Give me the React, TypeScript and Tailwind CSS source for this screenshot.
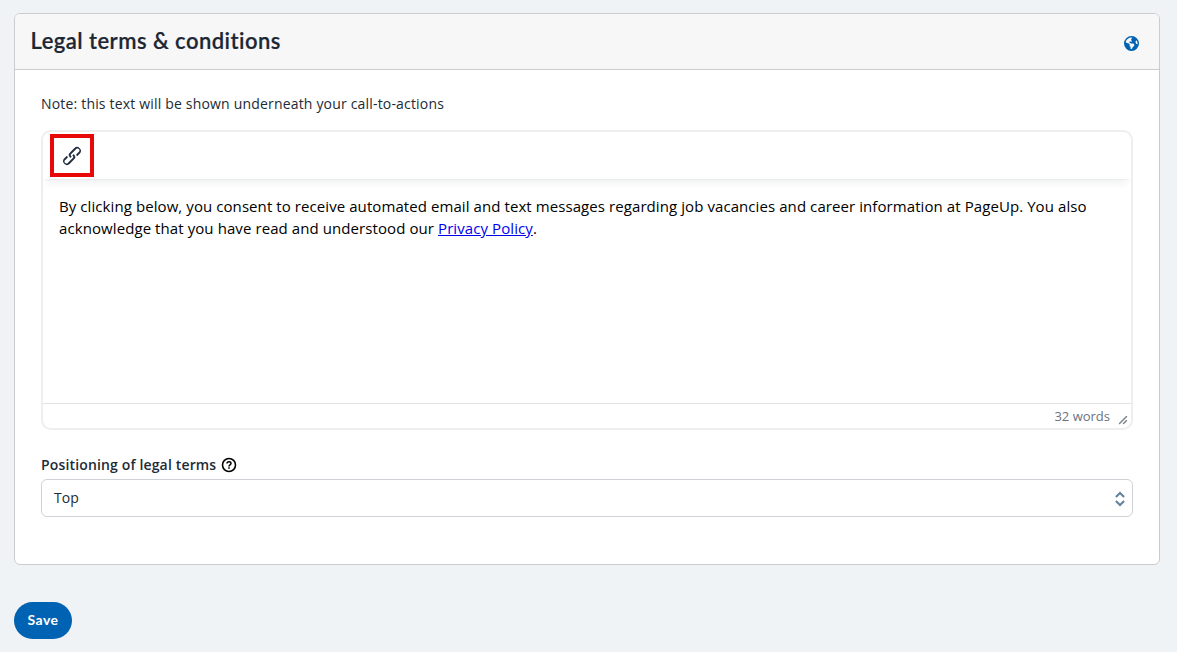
import { FaEarthAmericas } from "react-icons/fa6";

function LinkIcon() {
  return (
    <svg width="24" height="24" viewBox="0 0 24 24" fill="#222f3e">
      <path d="M6.2 12.3a1 1 0 0 1 1.4 1.4l-2 2a2 2 0 1 0 2.6 2.8l4.8-4.8a1 1 0 0 0 0-1.4 1 1 0 1 1 1.4-1.3 2.9 2.9 0 0 1 0 4L9.6 20a3.9 3.9 0 0 1-5.5-5.5l2-2Zm11.6-.6a1 1 0 0 1-1.4-1.4l2-2a2 2 0 1 0-2.6-2.8L11 10.3a1 1 0 0 0 0 1.4A1 1 0 1 1 9.6 13a2.9 2.9 0 0 1 0-4L14.4 4a3.9 3.9 0 0 1 5.5 5.5l-2 2Z" />
    </svg>
  );
}

function HelpIcon() {
  return (
    <svg width="16" height="16" viewBox="0 0 16 16" fill="none" stroke="#000" strokeWidth="1.6">
      <circle cx="8" cy="8" r="6.5" />
      <path d="M6 6.6C6 5.3 6.9 4.7 8 4.7s2 .7 2 1.7c0 1.4-2 1.4-2 3" strokeWidth="1.5" />
      <path d="M8 10.3v1.5" strokeWidth="1.6" />
    </svg>
  );
}

export default function App() {
  return (
    <div className="h-[652px] w-[1177px] overflow-hidden bg-[#eff3f6] px-[14px] pt-[13px] font-['Open_Sans','Noto_Sans',sans-serif]">
      <section className="flex h-[552px] w-[1146px] flex-col overflow-hidden rounded-[6px] border border-[#ccc] bg-white">
        <header className="flex h-14 shrink-0 items-center justify-between border-b border-[#ccc] bg-[#f7f7f7] pr-[20px] pl-[15.5px]">
          <h1 className="pb-[2px] font-['Lato',sans-serif] text-[22px] leading-7 font-semibold tracking-[0.46px] whitespace-nowrap text-[#1c2733] [-webkit-text-stroke:0.2px_#1c2733]">
            Legal terms &amp; conditions
          </h1>
          <FaEarthAmericas size={15} color="#0062b2" className="mt-[4px]" />
        </header>
        <div className="flex flex-col px-[26px] pt-[24px]">
          <p className="text-[14px] leading-5 tracking-[0.18px] whitespace-nowrap text-[#212b36]">
            Note: this text will be shown underneath your call-to-actions
          </p>
          <div className="mt-4 flex h-[300px] flex-col overflow-hidden rounded-[10px] border-2 border-[#eee] bg-white">
            <div className="z-10 flex h-[47px] shrink-0 items-start pt-[2px] pl-[7px] shadow-[0_2px_2px_-2px_rgba(34,47,62,.1),0_8px_8px_-4px_rgba(34,47,62,.07)]">
              <button className="flex h-[43px] w-11 items-center justify-center border-4 border-[#e90808]">
                <LinkIcon />
              </button>
            </div>
            <div className="flex grow flex-col items-start px-4 pt-[16px] text-[15px] leading-[22px] whitespace-nowrap text-black">
              <span className="tracking-[0.08px]">
                By clicking below, you consent to receive automated email and text messages regarding job vacancies and career information at PageUp. You also
              </span>
              <span className="tracking-[0.085px]">
                acknowledge that you have read and understood our{" "}
                <a className="text-[#0000ee] underline">Privacy Policy</a>.
              </span>
            </div>
            <div className="flex h-[25px] shrink-0 justify-end border-t border-[#e3e3e3] pr-[3px]">
              <span className="text-[13px] leading-6 text-[#6b7280]">32 words</span>
              <svg className="mt-[11px] ml-2" width="10" height="10" viewBox="0 0 10 10" fill="#7a828b">
                <path d="M8.1 1.1A.5.5 0 1 1 9 2l-7 7A.5.5 0 1 1 1 8l7-7ZM8.1 5.1A.5.5 0 1 1 9 6L6 9A.5.5 0 1 1 5 8l3-3Z" />
              </svg>
            </div>
          </div>
          <label className="mt-[25px] flex h-5 items-center gap-[5px] text-[14px] leading-5 font-semibold text-[#212b36]">
            <span className="tracking-[0.15px]">Positioning of legal terms</span>
            <HelpIcon />
          </label>
          <div className="mt-1 flex h-[38px] items-center justify-between rounded-[6px] border border-[#ced1d6] pr-[7px] pl-3 text-[14px] text-[#212b36]">
            <span className="pb-[2px]">Top</span>
            <svg className="mt-[2px]" width="10" height="16" viewBox="0 0 10 16" fill="none" stroke="#64809c" strokeWidth="2">
              <path d="M.9 6 5 2l4.1 4M.9 10 5 14l4.1-4" />
            </svg>
          </div>
        </div>
      </section>
      <button className="mt-[37px] flex h-[37px] w-[58px] items-center justify-center rounded-full bg-[#0062b2] pb-[2px] font-['Lato',sans-serif] text-[14px] font-bold tracking-[0.5px] text-white">
        Save
      </button>
    </div>
  );
}
